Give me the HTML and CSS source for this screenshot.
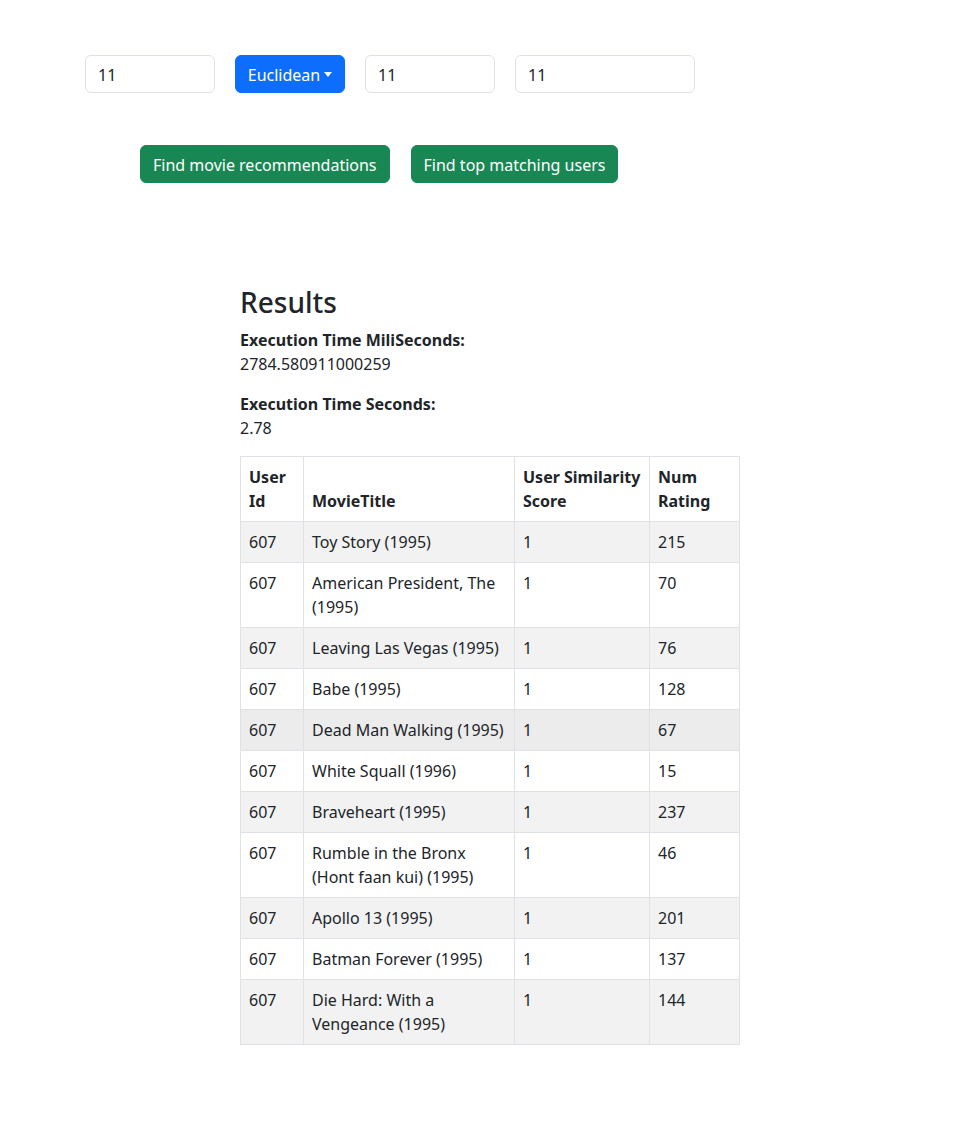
FILE: index.html
```html
<!DOCTYPE html>
<html lang="en">
<head>
<meta charset="utf-8">
<title>Movie Recommendations</title>
<link rel="stylesheet" href="styles.css">
</head>
<body>
<div class="controls">
  <input class="form-input w-sm" type="text" value="11">
  <button class="dropdown-btn" type="button">Euclidean<span class="caret"></span></button>
  <input class="form-input w-sm" type="text" value="11">
  <input class="form-input w-lg" type="text" value="11">
</div>
<div class="actions">
  <button class="btn-success" type="button">Find movie recommendations</button>
  <button class="btn-success" type="button">Find top matching users</button>
</div>
<section class="results">
  <h3 class="results-title">Results</h3>
  <p class="stat"><strong>Execution Time MiliSeconds:</strong><br>2784.580911000259</p>
  <p class="stat"><strong>Execution Time Seconds:</strong><br>2.78</p>
  <table class="data-table">
    <colgroup>
      <col class="c1"><col class="c2"><col class="c3"><col class="c4">
    </colgroup>
    <thead>
      <tr><th>User Id</th><th>MovieTitle</th><th>User Similarity Score</th><th>Num Rating</th></tr>
    </thead>
    <tbody>
      <tr><td>607</td><td>Toy Story (1995)</td><td>1</td><td>215</td></tr>
      <tr><td>607</td><td>American President, The (1995)</td><td>1</td><td>70</td></tr>
      <tr><td>607</td><td>Leaving Las Vegas (1995)</td><td>1</td><td>76</td></tr>
      <tr><td>607</td><td>Babe (1995)</td><td>1</td><td>128</td></tr>
      <tr class="hovered"><td>607</td><td>Dead Man Walking (1995)</td><td>1</td><td>67</td></tr>
      <tr><td>607</td><td>White Squall (1996)</td><td>1</td><td>15</td></tr>
      <tr><td>607</td><td>Braveheart (1995)</td><td>1</td><td>237</td></tr>
      <tr><td>607</td><td>Rumble in the Bronx (Hont faan kui) (1995)</td><td>1</td><td>46</td></tr>
      <tr><td>607</td><td>Apollo 13 (1995)</td><td>1</td><td>201</td></tr>
      <tr><td>607</td><td>Batman Forever (1995)</td><td>1</td><td>137</td></tr>
      <tr><td>607</td><td>Die Hard: With a Vengeance (1995)</td><td>1</td><td>144</td></tr>
    </tbody>
  </table>
</section>
</body>
</html>
```
FILE: styles.css
```css
* { box-sizing: border-box; }

body {
  margin: 0;
  font-family: "Noto Sans", "Liberation Sans", sans-serif;
  font-size: 16px;
  line-height: 1.5;
  color: #212529;
  background: #fff;
}

.controls {
  display: flex;
  gap: 20px;
  padding: 55px 0 0 85px;
}

.form-input {
  height: 38px;
  padding: 7px 12px 5px;
  font: inherit;
  color: #212529;
  background: #fff;
  border: 1px solid #dee2e6;
  border-radius: 6px;
  outline: none;
}
.w-sm { width: 130px; }
.w-lg { width: 180px; }

.dropdown-btn {
  height: 38px;
  width: 110px;
  padding: 7px 12px 5px;
  font: inherit;
  color: #fff;
  background: #0d6efd;
  border: 1px solid #0d6efd;
  border-radius: 6px;
  display: inline-flex;
  align-items: center;
  justify-content: center;
}
.caret {
  display: inline-block;
  margin-left: 4px;
  width: 0;
  height: 0;
  border-top: 5px solid #fff;
  border-left: 4px solid transparent;
  border-right: 4px solid transparent;
  margin-top: -2px;
}

.actions {
  display: flex;
  gap: 21px;
  padding: 52px 0 0 140px;
}

.btn-success {
  height: 38px;
  padding: 7px 12px 5px;
  font: inherit;
  color: #fff;
  background: #198754;
  border: 1px solid #198754;
  border-radius: 6px;
}

.results {
  padding: 103px 0 60px 240px;
}

.results-title {
  margin: 0 0 8px;
  font-size: 28px;
  font-weight: 500;
  line-height: 1.2;
}

.stat {
  margin: 0 0 16px;
}
.stat strong { font-weight: 700; }

.data-table {
  border-collapse: collapse;
  table-layout: fixed;
  width: 499px;
}
.c1 { width: 63px; }
.c2 { width: 211px; }
.c3 { width: 135px; }
.c4 { width: 90px; }

.data-table th,
.data-table td {
  padding: 8px;
  border: 1px solid #dee2e6;
  text-align: left;
}
.data-table th {
  vertical-align: bottom;
  font-weight: 700;
}
.data-table td {
  vertical-align: top;
}
.data-table tbody tr:nth-child(odd) td {
  background: #f2f2f2;
}
.data-table tbody tr.hovered td {
  background: #ececec;
}
```
